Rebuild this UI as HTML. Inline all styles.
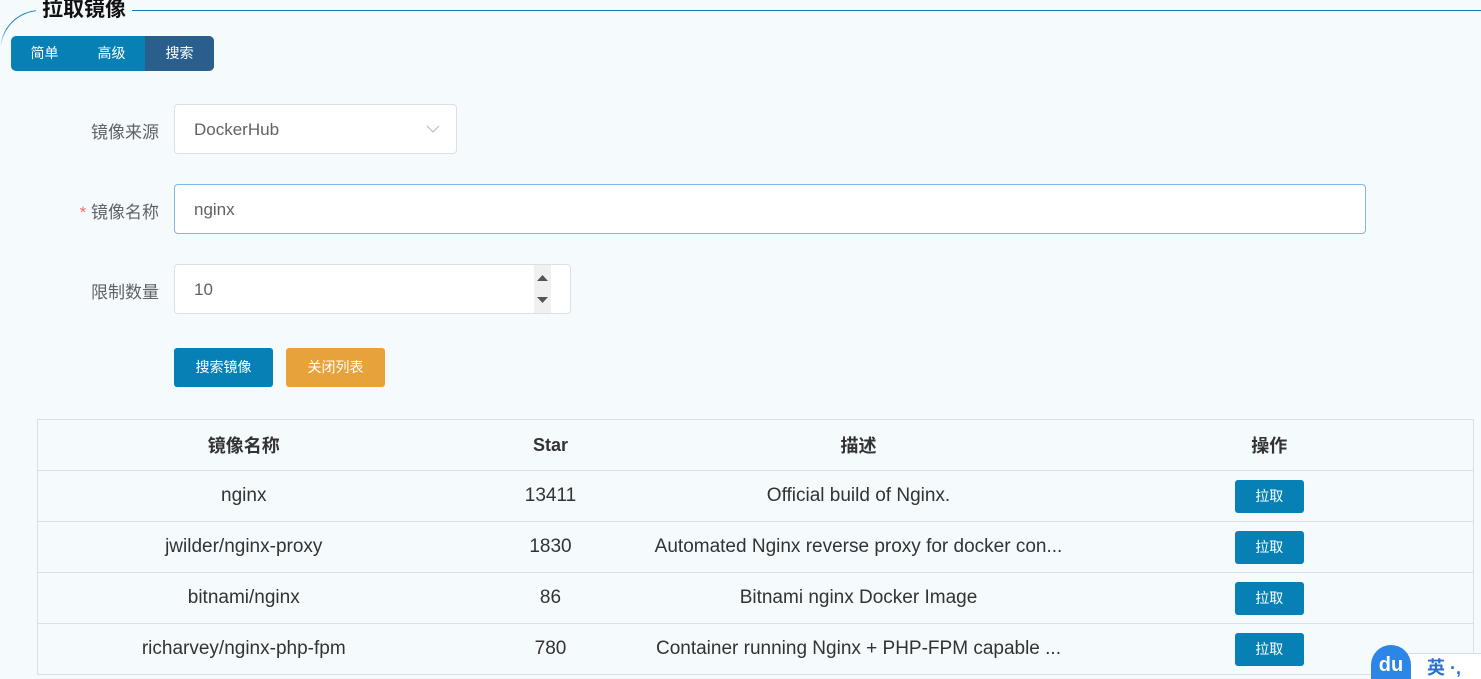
<!DOCTYPE html>
<html><head><meta charset="utf-8"><style>
*{box-sizing:border-box;margin:0;padding:0}
html,body{width:1481px;height:679px;overflow:hidden}
body{background:#f5fafd;font-family:"Liberation Sans","Noto Sans CJK SC",sans-serif;position:relative;color:#333}
.fs{position:absolute;left:0;top:10px;width:1481px;height:60px;border-top:1px solid #0b7fb5;border-left:1px solid #0b7fb5;border-top-left-radius:40px;-webkit-mask:linear-gradient(#000 30%,transparent 60%);mask:linear-gradient(#000 30%,transparent 60%)}
.legend{position:absolute;left:36px;top:-1px;padding:0 6px;background:#f5fafd;font-size:21px;font-weight:bold;color:#111;line-height:22px}
.tabs{position:absolute;left:11px;top:36px;height:35px;width:203px;border-radius:5px;overflow:hidden;display:flex;background:#0780b5}
.tabs div{width:67px;color:#fff;font-size:14px;line-height:35px;text-align:center}
.tabs div.a{background:#2a5f8d;width:69px}
.lbl{position:absolute;right:1322px;font-size:17px;color:#606266;text-align:right}
.inp{position:absolute;background:#fff;border:1px solid #dcdfe6;border-radius:4px;font-size:17px;color:#606266;padding-left:19px}
.btn{position:absolute;top:348px;height:39px;width:99px;border-radius:3px;color:#fff;font-size:14px;line-height:39px;text-align:center}
table{position:absolute;left:37px;top:419px;width:1437px;border-collapse:collapse;border:1px solid #dcdfe6;font-size:19px;color:#333;table-layout:fixed}
td,th{text-align:center;border-bottom:1px solid #dcdfe6;height:51px;white-space:nowrap;overflow:hidden}
th{font-weight:bold;font-size:18px;color:#333}
.pb{display:inline-block;width:69px;height:33px;line-height:33px;background:#0780b5;color:#fff;font-size:14px;border-radius:3px}
</style></head><body>
<div class="fs"></div><div class="legend">拉取镜像</div>
<div class="tabs"><div>简单</div><div>高级</div><div class="a">搜索</div></div>
<div class="lbl" style="top:118px">镜像来源</div>
<div class="inp" style="left:174px;top:104px;width:283px;height:50px;line-height:50px">DockerHub<svg style="position:absolute;right:16px;top:20px" width="14" height="9" viewBox="0 0 14 9"><path d="M1 1l6 6 6-6" fill="none" stroke="#c0c4cc" stroke-width="1.3"/></svg></div>
<div class="lbl" style="top:198px"><span style="color:#f56c6c">*</span> 镜像名称</div>
<div class="inp" style="left:174px;top:184px;width:1192px;height:50px;line-height:50px;border-color:#7fb7e6">nginx</div>
<div class="lbl" style="top:278px">限制数量</div>
<div class="inp" style="left:174px;top:264px;width:397px;height:50px;line-height:50px">10<div style="position:absolute;left:359px;top:0;width:17px;height:48px;background:#f0f0f0"><svg width="17" height="48" style="display:block"><path d="M3 16h11l-5.5-6z M3 32h11l-5.5 6z" fill="#555"/></svg></div></div>
<div class="btn" style="left:174px;background:#0780b5">搜索镜像</div>
<div class="btn" style="left:286px;background:#e8a23c">关闭列表</div>
<table>
<tr><th style="width:412px">镜像名称</th><th style="width:202px">Star</th><th style="width:414px">描述</th><th>操作</th></tr>
<tr><td>nginx</td><td>13411</td><td>Official build of Nginx.</td><td><span class="pb">拉取</span></td></tr>
<tr><td>jwilder/nginx-proxy</td><td>1830</td><td>Automated Nginx reverse proxy for docker con...</td><td><span class="pb">拉取</span></td></tr>
<tr><td>bitnami/nginx</td><td>86</td><td>Bitnami nginx Docker Image</td><td><span class="pb">拉取</span></td></tr>
<tr><td>richarvey/nginx-php-fpm</td><td>780</td><td>Container running Nginx + PHP-FPM capable ...</td><td><span class="pb">拉取</span></td></tr>
</table>
<div style="position:absolute;left:1405px;top:653px;width:76px;height:26px;background:#fff;border:1px solid #cfe0f3;border-right:0;border-bottom:0"></div>
<div style="position:absolute;left:1371px;top:645px;width:40px;height:34px;border-radius:20px 20px 0 0;background:#2b86e8;color:#fff;font-size:20px;font-weight:bold;line-height:40px;text-align:center;overflow:hidden">du</div>
<div style="position:absolute;left:1427px;top:658px;color:#2b6fd0;font-size:18px;font-weight:bold;line-height:21px">英 ·,</div>
</body></html>
